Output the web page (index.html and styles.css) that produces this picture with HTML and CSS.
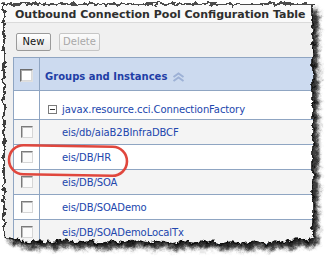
FILE: index.html
```html
<!DOCTYPE html>
<html>
<head>
<meta charset="utf-8">
<link rel="stylesheet" href="styles.css">
</head>
<body>
<div class="paper">
  <div class="title">Outbound Connection Pool Configuration Table</div>
  <div class="toolbar">
    <button class="btn btn-new">New</button>
    <button class="btn btn-delete" disabled>Delete</button>
  </div>
  <div class="grid">
    <div class="row head">
      <div class="sel"><span class="cb cb-head"></span></div>
      <div class="name">Groups and Instances
        <svg class="sort" width="13" height="10" viewBox="0 0 13 10">
          <path d="M1.5 5 L6.5 1.5 L11.5 5" fill="none" stroke="#9db1d6" stroke-width="2"/>
          <path d="M1.5 9 L6.5 5.5 L11.5 9" fill="none" stroke="#9db1d6" stroke-width="2"/>
        </svg>
      </div>
    </div>
    <div class="row group">
      <div class="sel"></div>
      <div class="name"><span class="minus"></span><span class="link">javax.resource.cci.ConnectionFactory</span></div>
    </div>
    <div class="row alt">
      <div class="sel"><span class="cb"></span></div>
      <div class="name leaf"><span class="link">eis/db/aiaB2BInfraDBCF</span></div>
    </div>
    <div class="row">
      <div class="sel"><span class="cb"></span></div>
      <div class="name leaf"><span class="link">eis/DB/HR</span></div>
    </div>
    <div class="row alt">
      <div class="sel"><span class="cb"></span></div>
      <div class="name leaf"><span class="link">eis/DB/SOA</span></div>
    </div>
    <div class="row">
      <div class="sel"><span class="cb"></span></div>
      <div class="name leaf"><span class="link">eis/DB/SOADemo</span></div>
    </div>
    <div class="row alt">
      <div class="sel"><span class="cb"></span></div>
      <div class="name leaf"><span class="link">eis/DB/SOADemoLocalTx</span></div>
    </div>
  </div>
</div>
<svg class="torn" width="326" height="260" viewBox="0 0 326 260">
  <defs>
    <filter id="rough" x="-10%" y="-10%" width="120%" height="120%">
      <feTurbulence type="fractalNoise" baseFrequency="0.19" numOctaves="4" seed="11" result="n"/>
      <feDisplacementMap in="SourceGraphic" in2="n" scale="7" xChannelSelector="R" yChannelSelector="G"/>
    </filter>
    <filter id="blur" x="-20%" y="-20%" width="140%" height="140%">
      <feGaussianBlur stdDeviation="2"/>
    </filter>
    <path id="sheet" d="M4 4 H313 V238 L306 241 L296 239 L286 243 L276 241 L265 244 L254 241 L243 245 L232 242 L220 244 L208 241 L196 243 L184 241 L172 244 L160 241 L148 243 L136 240 L124 243 L112 241 L100 244 L88 241 L76 243 L64 240 L52 243 L40 241 L28 243 L16 240 L8 238 L4 235 Z"/>
    <mask id="outside" maskUnits="userSpaceOnUse" x="-30" y="-30" width="386" height="320">
      <rect x="-30" y="-30" width="386" height="320" fill="#ffffff"/>
      <use href="#sheet" fill="#000000"/>
    </mask>
  </defs>
  <g filter="url(#rough)">
    <path d="M-30 -30H356V290H-30Z M4 4 H313 V238 L306 241 L296 239 L286 243 L276 241 L265 244 L254 241 L243 245 L232 242 L220 244 L208 241 L196 243 L184 241 L172 244 L160 241 L148 243 L136 240 L124 243 L112 241 L100 244 L88 241 L76 243 L64 240 L52 243 L40 241 L28 243 L16 240 L8 238 L4 235 Z" fill="#ffffff" fill-rule="evenodd"/>
    <g mask="url(#outside)">
      <use href="#sheet" fill="#000000" fill-opacity="0.85" transform="translate(5 6)" filter="url(#blur)"/>
    </g>
    <use href="#sheet" fill="none" stroke="#111111" stroke-width="1.6"/>
  </g>
  <rect class="oval" x="9" y="146" width="118" height="29" rx="14.5" ry="14.5" fill="none" stroke="#e0473d" stroke-width="2.6" transform="rotate(1 68 160)"/>
</svg>
</body>
</html>
```

FILE: styles.css
```css
html, body {
  margin: 0;
  padding: 0;
}
body {
  width: 326px;
  height: 260px;
  overflow: hidden;
  position: relative;
  background: #ffffff;
  font-family: "DejaVu Sans", sans-serif;
}
.paper {
  width: 326px;
  height: 260px;
  overflow: hidden;
  background: #f0f0f0;
}
.title {
  height: 23px;
  box-sizing: border-box;
  padding: 8px 0 0 15px;
  font-weight: bold;
  font-size: 11px;
  line-height: 13px;
  color: #2e2e2e;
  background: #f9f9f9;
  border-bottom: 1px solid #dadada;
  white-space: nowrap;
}
.toolbar {
  height: 34px;
  box-sizing: border-box;
  padding: 10px 0 0 16px;
  display: flex;
  gap: 8px;
  align-items: flex-start;
}
.btn {
  height: 18px;
  padding: 0;
  margin: 0;
  font-family: "DejaVu Sans", sans-serif;
  font-size: 10px;
  line-height: 16px;
  text-align: center;
  border: 1px solid #9a9a9a;
  border-radius: 2px;
  background: linear-gradient(#ffffff, #e6e6e6);
  color: #111;
}
.btn-new { width: 35px; }
.btn-delete {
  width: 41px;
  color: #a8a8a8;
  border-color: #c6c6c6;
  background: linear-gradient(#fbfbfb, #ececec);
}
.grid {
  margin-left: 13px;
  width: 308px;
  border-top: 1px solid #8fa5c2;
  border-left: 1px solid #8fa5c2;
}
.row {
  display: grid;
  grid-template-columns: 26px 1fr;
  height: 25px;
  box-sizing: border-box;
  border-bottom: 1px solid #8fa5c2;
  background: #ffffff;
}
.row.alt { background: #f4f4f4; }
.row.head {
  height: 33px;
  background: #ccdaef;
}
.row.group { height: 29px; }
.sel {
  border-right: 1px solid #8fa5c2;
  display: flex;
  align-items: center;
  justify-content: center;
}
.name {
  display: flex;
  align-items: center;
  font-size: 10px;
  line-height: 12px;
  white-space: nowrap;
  color: #1e3fa0;
}
.head .name {
  padding: 5px 0 0 5px;
  box-sizing: border-box;
  font-weight: bold;
  color: #1f3ea6;
}
.sort {
  margin-left: 5px;
}
.group .name {
  padding: 9px 0 0 8px;
  box-sizing: border-box;
}
.leaf {
  padding: 1px 0 0 22px;
  box-sizing: border-box;
}
.link {
  color: #2146ad;
  letter-spacing: -0.1px;
}
.minus {
  width: 7px;
  height: 7px;
  border: 1px solid #7b7b7b;
  background: #ffffff;
  margin-right: 5px;
  position: relative;
  flex: none;
}
.minus::after {
  content: "";
  position: absolute;
  left: 1px;
  top: 3px;
  width: 5px;
  height: 1px;
  background: #333;
}
.cb {
  width: 10px;
  height: 10px;
  border: 1px solid;
  border-color: #7a7a7a #d6d6d6 #d6d6d6 #7a7a7a;
  background: #fbfbfb;
  box-shadow: inset 1px 1px 0 #bdbdbd;
}
.cb-head {
  width: 11px;
  height: 11px;
  margin-top: 2px;
  background: #ffffff;
  border-color: #6d6d6d #e0e0e0 #e0e0e0 #6d6d6d;
  box-shadow: inset 1px 1px 0 #a9a9a9, inset -1px -1px 0 #d9d9d9;
}
.torn {
  position: absolute;
  left: 0;
  top: 0;
}
```
